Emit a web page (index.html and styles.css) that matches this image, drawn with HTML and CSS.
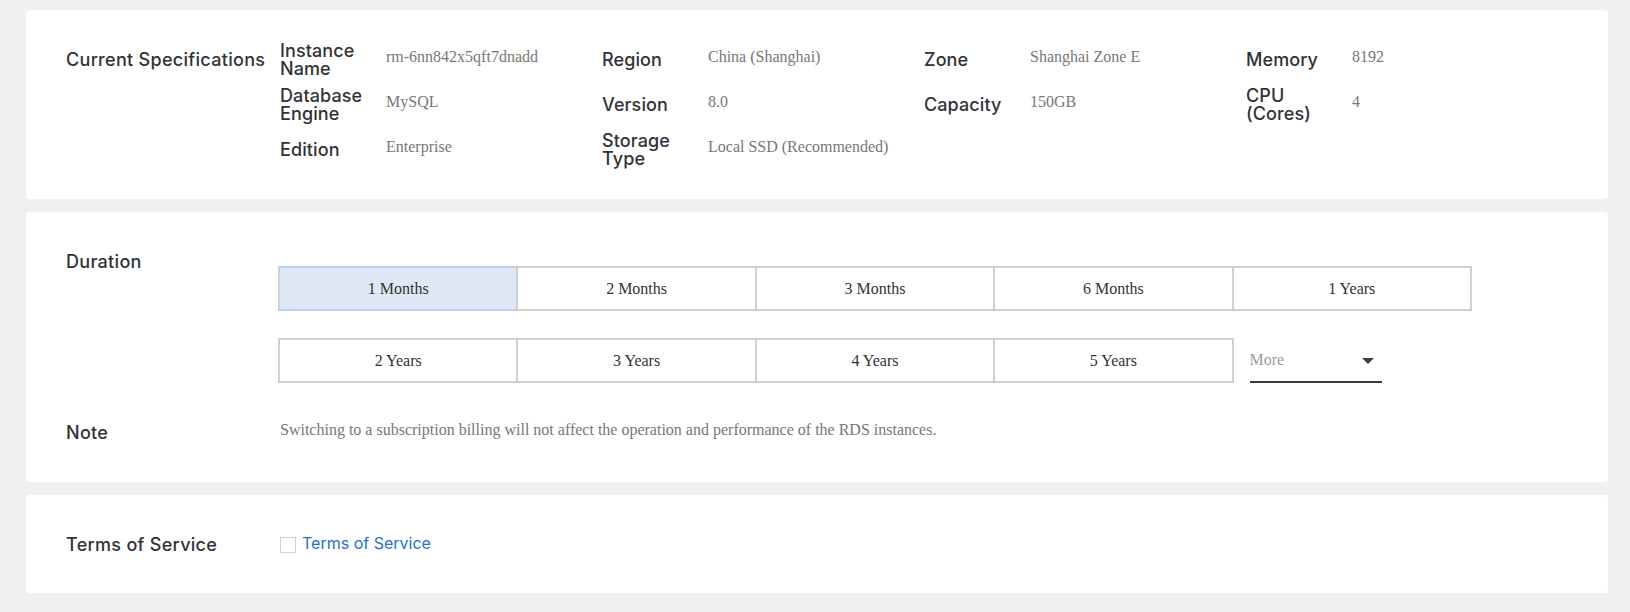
FILE: index.html
```html
<!DOCTYPE html>
<html lang="en">
<head>
<meta charset="utf-8">
<title>Change Billing Method</title>
<link rel="stylesheet" href="styles.css">
</head>
<body>
<main class="page">
  <section class="card card-specs">
    <div class="field">
      <div class="field-label">Current Specifications</div>
      <div class="specs">
        <div class="spec"><div class="spec-label">Instance Name</div><div class="spec-value">rm-6nn842x5qft7dnadd</div></div>
        <div class="spec"><div class="spec-label">Region</div><div class="spec-value">China (Shanghai)</div></div>
        <div class="spec"><div class="spec-label">Zone</div><div class="spec-value">Shanghai Zone E</div></div>
        <div class="spec"><div class="spec-label">Memory</div><div class="spec-value">8192</div></div>
        <div class="spec"><div class="spec-label">Database Engine</div><div class="spec-value">MySQL</div></div>
        <div class="spec"><div class="spec-label">Version</div><div class="spec-value">8.0</div></div>
        <div class="spec"><div class="spec-label">Capacity</div><div class="spec-value">150GB</div></div>
        <div class="spec"><div class="spec-label">CPU (Cores)</div><div class="spec-value">4</div></div>
        <div class="spec"><div class="spec-label">Edition</div><div class="spec-value">Enterprise</div></div>
        <div class="spec"><div class="spec-label">Storage Type</div><div class="spec-value">Local SSD (Recommended)</div></div>
      </div>
    </div>
  </section>

  <section class="card card-duration">
    <div class="field">
      <div class="field-label">Duration</div>
      <div class="durations">
        <div class="btn-row">
          <button class="dur-btn active">1 Months</button>
          <button class="dur-btn">2 Months</button>
          <button class="dur-btn">3 Months</button>
          <button class="dur-btn">6 Months</button>
          <button class="dur-btn">1 Years</button>
        </div>
        <div class="btn-row">
          <button class="dur-btn">2 Years</button>
          <button class="dur-btn">3 Years</button>
          <button class="dur-btn">4 Years</button>
          <button class="dur-btn">5 Years</button>
          <div class="more">
            <span class="more-text">More</span>
            <span class="caret"></span>
          </div>
        </div>
      </div>
    </div>
    <div class="field note-field">
      <div class="field-label">Note</div>
      <div class="note">Switching to a subscription billing will not affect the operation and performance of the RDS instances.</div>
    </div>
  </section>

  <section class="card">
    <div class="field">
      <div class="field-label">Terms of Service</div>
      <label class="terms">
        <span class="checkbox"></span>
        <a class="terms-link" href="#">Terms of Service</a>
      </label>
    </div>
  </section>
</main>
</body>
</html>
```

FILE: styles.css
```css
* {
  box-sizing: border-box;
}

html, body {
  margin: 0;
  padding: 0;
  background: #f0f0f0;
}

body {
  font-family: Inter, "Liberation Sans", sans-serif;
  color: #2f3338;
}

.page {
  padding: 10px 22px 0 26px;
  display: flex;
  flex-direction: column;
  gap: 13px;
}

.card {
  background: #ffffff;
  border-radius: 4px;
  padding: 27px 40px 26px 40px;
}

.card-specs {
  padding-bottom: 27px;
}

.card-duration {
  padding-bottom: 27px;
}

.field {
  display: flex;
  align-items: flex-start;
}

.field-label {
  width: 214px;
  flex: none;
  height: 45px;
  display: flex;
  align-items: center;
  font-size: 18px;
  font-weight: 500;
  line-height: 18px;
  letter-spacing: 0.3px;
  color: #2f3338;
}

.specs {
  display: grid;
  grid-template-columns: repeat(4, 322px);
  grid-auto-rows: 45px;
}

.spec {
  display: flex;
  align-items: center;
}

.spec-label {
  width: 106px;
  flex: none;
  padding-right: 12px;
  font-size: 18px;
  font-weight: 500;
  line-height: 17.6px;
  letter-spacing: 0.1px;
  color: #2f3338;
}

.spec-value {
  font-family: "Liberation Serif", serif;
  font-size: 16px;
  line-height: 18px;
  color: #777777;
  margin-top: -5px;
}

.durations {
  padding-top: 27px;
  margin-left: -2px;
  display: flex;
  flex-direction: column;
  gap: 27px;
}

.btn-row {
  display: flex;
  align-items: stretch;
}

.dur-btn {
  width: 240.4px;
  height: 45px;
  margin: 0;
  padding: 0;
  border: 2px solid #cfcfcf;
  background: #ffffff;
  font-family: "Liberation Serif", serif;
  font-size: 16px;
  color: #333333;
  display: flex;
  align-items: center;
  justify-content: center;
  position: relative;
}

.dur-btn + .dur-btn {
  margin-left: -2px;
}

.dur-btn.active {
  background: #dfe8f5;
  border-top-color: #b9d3ee;
  border-bottom-color: #b9d3ee;
}

.more {
  margin-left: 16px;
  width: 132px;
  height: 45px;
  border-bottom: 2px solid #373d41;
  display: flex;
  align-items: center;
  justify-content: space-between;
  padding-right: 8px;
}

.more-text {
  font-family: "Liberation Serif", serif;
  font-size: 16px;
  color: #9a9a9a;
}

.caret {
  width: 0;
  height: 0;
  border-left: 6px solid transparent;
  border-right: 6px solid transparent;
  border-top: 6px solid #373d41;
  margin-top: 2px;
}

.note-field {
  margin-top: 27px;
}

.note {
  height: 45px;
  display: flex;
  align-items: center;
  font-family: "Liberation Serif", serif;
  font-size: 16px;
  color: #777777;
  padding-bottom: 6px;
}

.terms {
  height: 45px;
  display: flex;
  align-items: center;
  gap: 6px;
  padding-bottom: 4px;
}

.checkbox {
  width: 16px;
  height: 16px;
  border: 1.5px solid #d2d2d2;
  background: #ffffff;
  flex: none;
  margin-top: 4px;
}

.terms-link {
  font-size: 16px;
  color: #2a6cd3;
  text-decoration: none;
}
```
